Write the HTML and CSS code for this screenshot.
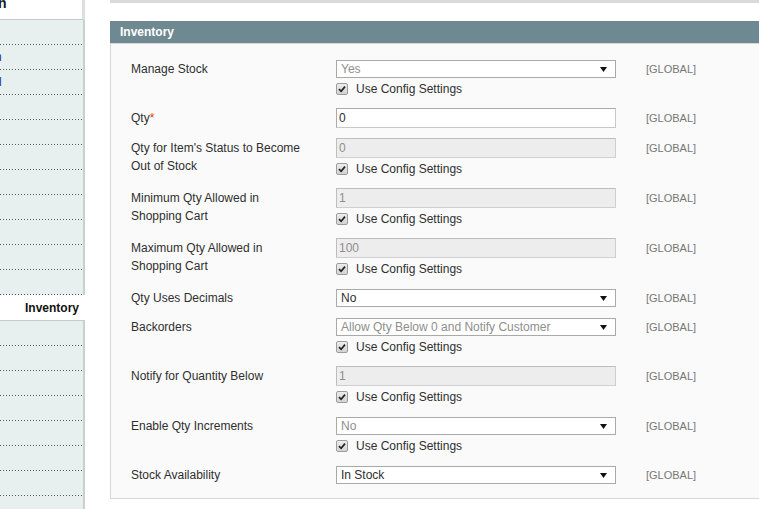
FILE: index.html
```html
<!DOCTYPE html>
<html lang="en">
<head>
<meta charset="utf-8">
<title>Inventory</title>
<link rel="stylesheet" href="styles.css">
</head>
<body>
<div class="page">
  <aside class="sidebar">
    <div class="side-head"><span class="side-title">n</span></div>
    <ul class="tabs">
      <li class="tab"></li>
      <li class="tab"><span class="frag frag-n">n</span></li>
      <li class="tab"><span class="frag frag-l">l</span></li>
      <li class="tab"></li>
      <li class="tab"></li>
      <li class="tab"></li>
      <li class="tab"></li>
      <li class="tab"></li>
      <li class="tab"></li>
      <li class="tab"></li>
      <li class="tab"></li>
      <li class="tab active">Inventory</li>
      <li class="tab"></li>
      <li class="tab"></li>
      <li class="tab"></li>
      <li class="tab"></li>
      <li class="tab"></li>
      <li class="tab"></li>
      <li class="tab"></li>
      <li class="tab"></li>
    </ul>
  </aside>

  <main class="main">
    <div class="topbar"></div>
    <section class="entry">
      <div class="entry-head"><h4>Inventory</h4></div>
      <div class="fieldset">

        <div class="row">
          <div class="label">Manage Stock</div>
          <div class="value">
            <div class="select is-disabled"><span>Yes</span><svg class="arrow" width="7" height="5" viewBox="0 0 7 5"><polygon points="0,0 7,0 3.5,5"/></svg></div>
            <div class="check"><span class="box"><svg width="10" height="10" viewBox="0 0 10 10"><path d="M2 5.2 L4.1 7.3 L8 2.6"/></svg></span><span>Use Config Settings</span></div>
          </div>
          <div class="scope">[GLOBAL]</div>
        </div>

        <div class="row">
          <div class="label">Qty<span class="req">*</span></div>
          <div class="value">
            <div class="input">0</div>
          </div>
          <div class="scope">[GLOBAL]</div>
        </div>

        <div class="row">
          <div class="label">Qty for Item's Status to Become Out of Stock</div>
          <div class="value">
            <div class="input is-disabled">0</div>
            <div class="check"><span class="box"><svg width="10" height="10" viewBox="0 0 10 10"><path d="M2 5.2 L4.1 7.3 L8 2.6"/></svg></span><span>Use Config Settings</span></div>
          </div>
          <div class="scope">[GLOBAL]</div>
        </div>

        <div class="row">
          <div class="label">Minimum Qty Allowed in Shopping Cart</div>
          <div class="value">
            <div class="input is-disabled">1</div>
            <div class="check"><span class="box"><svg width="10" height="10" viewBox="0 0 10 10"><path d="M2 5.2 L4.1 7.3 L8 2.6"/></svg></span><span>Use Config Settings</span></div>
          </div>
          <div class="scope">[GLOBAL]</div>
        </div>

        <div class="row">
          <div class="label">Maximum Qty Allowed in Shopping Cart</div>
          <div class="value">
            <div class="input is-disabled">100</div>
            <div class="check"><span class="box"><svg width="10" height="10" viewBox="0 0 10 10"><path d="M2 5.2 L4.1 7.3 L8 2.6"/></svg></span><span>Use Config Settings</span></div>
          </div>
          <div class="scope">[GLOBAL]</div>
        </div>

        <div class="row">
          <div class="label">Qty Uses Decimals</div>
          <div class="value">
            <div class="select"><span>No</span><svg class="arrow" width="7" height="5" viewBox="0 0 7 5"><polygon points="0,0 7,0 3.5,5"/></svg></div>
          </div>
          <div class="scope">[GLOBAL]</div>
        </div>

        <div class="row">
          <div class="label">Backorders</div>
          <div class="value">
            <div class="select is-disabled"><span>Allow Qty Below 0 and Notify Customer</span><svg class="arrow" width="7" height="5" viewBox="0 0 7 5"><polygon points="0,0 7,0 3.5,5"/></svg></div>
            <div class="check"><span class="box"><svg width="10" height="10" viewBox="0 0 10 10"><path d="M2 5.2 L4.1 7.3 L8 2.6"/></svg></span><span>Use Config Settings</span></div>
          </div>
          <div class="scope">[GLOBAL]</div>
        </div>

        <div class="row">
          <div class="label">Notify for Quantity Below</div>
          <div class="value">
            <div class="input is-disabled">1</div>
            <div class="check"><span class="box"><svg width="10" height="10" viewBox="0 0 10 10"><path d="M2 5.2 L4.1 7.3 L8 2.6"/></svg></span><span>Use Config Settings</span></div>
          </div>
          <div class="scope">[GLOBAL]</div>
        </div>

        <div class="row">
          <div class="label">Enable Qty Increments</div>
          <div class="value">
            <div class="select is-disabled"><span>No</span><svg class="arrow" width="7" height="5" viewBox="0 0 7 5"><polygon points="0,0 7,0 3.5,5"/></svg></div>
            <div class="check"><span class="box"><svg width="10" height="10" viewBox="0 0 10 10"><path d="M2 5.2 L4.1 7.3 L8 2.6"/></svg></span><span>Use Config Settings</span></div>
          </div>
          <div class="scope">[GLOBAL]</div>
        </div>

        <div class="row">
          <div class="label">Stock Availability</div>
          <div class="value">
            <div class="select"><span>In Stock</span><svg class="arrow" width="7" height="5" viewBox="0 0 7 5"><polygon points="0,0 7,0 3.5,5"/></svg></div>
          </div>
          <div class="scope">[GLOBAL]</div>
        </div>

      </div>
    </section>
  </main>
</div>
</body>
</html>
```

FILE: styles.css
```css
html, body {
  margin: 0;
  padding: 0;
  background: #fff;
  overflow: hidden;
}

body {
  font-family: "Liberation Sans", Arial, sans-serif;
  font-size: 12px;
  color: #2f2f2f;
}

.page {
  display: flex;
  width: 759px;
  height: 509px;
  overflow: hidden;
}

/* ---------- sidebar ---------- */
.sidebar {
  flex: 0 0 85px;
  width: 85px;
}

.side-head {
  box-sizing: border-box;
  height: 20px;
  border-bottom: 1px solid #c3cdcc;
  border-right: 3px solid #dedede;
  overflow: hidden;
}

.side-title {
  display: block;
  font-size: 14px;
  font-weight: bold;
  line-height: 6px;
  color: #1a1a1a;
  margin-left: -2px;
}

.tabs {
  list-style: none;
  margin: 0;
  padding: 0;
}

.tab {
  box-sizing: border-box;
  height: 25px;
  line-height: 24px;
  background: linear-gradient(to right, #5a5a5a 1px, transparent 1px) left bottom / 3px 1px repeat-x #e7efef;
  border-right: 2px solid #c6d1d0;
  overflow: hidden;
  white-space: nowrap;
  color: #1d3590;
}

.tab.active {
  height: 26px;
  line-height: 26px;
  background: #fff;
  border-right: none;
  border-bottom: 1px solid #c3cdcc;
  text-align: right;
  padding-right: 6px;
  font-weight: bold;
  color: #111;
}

.frag-n {
  margin-left: -5px;
}

.frag-l {
  margin-left: -1px;
}

/* ---------- main ---------- */
.main {
  flex: 0 0 700px;
  margin-left: 25px;
}

.topbar {
  height: 3px;
  background: #dadada;
  margin-bottom: 18px;
}

.entry-head {
  height: 22px;
  background: #6f8992;
  padding: 0 10px;
}

.entry-head h4 {
  margin: 0;
  font-size: 12px;
  line-height: 22px;
  font-weight: bold;
  color: #fff;
}

.fieldset {
  border: 1px solid #d6d6d6;
  background: #fafafa;
  padding: 15px 0 14px 20px;
  display: flex;
  flex-direction: column;
  gap: 10px;
}

.row {
  display: flex;
  align-items: flex-start;
}

.label {
  flex: 0 0 205px;
  box-sizing: border-box;
  padding: 1px 25px 0 0;
  line-height: 18px;
  color: #2f2f2f;
}

.req {
  color: #eb340a;
}

.value {
  flex: 0 0 280px;
  width: 280px;
}

.scope {
  margin-left: 30px;
  padding-top: 1px;
  line-height: 18px;
  font-size: 11px;
  color: #777;
}

.select {
  box-sizing: border-box;
  height: 18px;
  margin-top: 1px;
  border: 1px solid #a9a9a9;
  background: #fff;
  display: flex;
  align-items: center;
  justify-content: space-between;
  padding: 0 8px 0 4px;
  line-height: 16px;
  color: #2f2f2f;
}

.select.is-disabled {
  color: #8e8e8e;
}

.arrow {
  fill: #111;
  flex: 0 0 auto;
}

.input {
  box-sizing: border-box;
  height: 20px;
  border: 1px solid;
  border-color: #aaa #c8c8c8 #c8c8c8 #aaa;
  background: #fff;
  padding: 0 2px;
  line-height: 18px;
  color: #2f2f2f;
}

.input.is-disabled {
  background: #ededed;
  border-color: #bdbdbd #cfcfcf #cfcfcf #bdbdbd;
  color: #8e8e8e;
}

.check {
  box-sizing: border-box;
  display: flex;
  align-items: center;
  height: 20px;
  padding-top: 2px;
  gap: 8px;
  color: #2f2f2f;
}

.box {
  box-sizing: border-box;
  width: 12px;
  height: 12px;
  border: 1px solid #9c9c9c;
  border-radius: 2px;
  background: linear-gradient(#ececec, #d3d3d3);
  display: flex;
  align-items: center;
  justify-content: center;
}

.box path {
  fill: none;
  stroke: #222;
  stroke-width: 1.7;
}
```
